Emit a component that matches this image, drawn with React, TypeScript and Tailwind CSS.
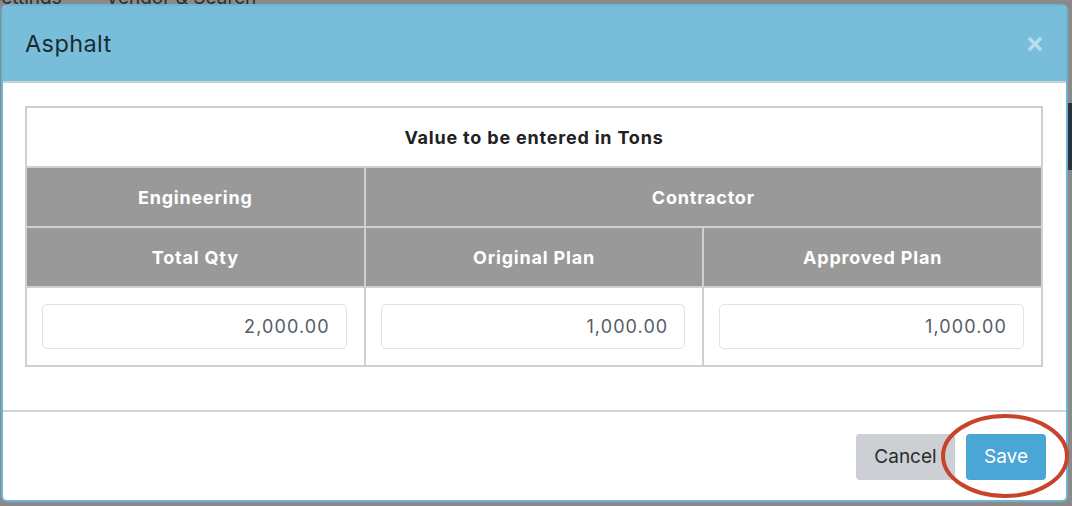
import React from "react";

const font = { fontFamily: "Inter, 'Noto Sans', 'Liberation Sans', sans-serif" };

function Cell({ children, className = "" }: { children?: React.ReactNode; className?: string }) {
  return <div className={`flex items-center justify-center ${className}`}>{children}</div>;
}

function QtyInput({ value }: { value: string }) {
  return (
    <div className="flex h-[45px] w-full items-center justify-end rounded-[5px] border-[1.5px] border-[#dfe2e6] bg-white pr-[16px] text-[18px] tracking-[1.1px] text-[#555d66]">
      {value}
    </div>
  );
}

export default function App() {
  return (
    <div className="relative h-[506px] w-[1072px] overflow-hidden bg-[#8a8a8a]" style={font}>
      {/* page behind the overlay */}
      <div className="h-[4px] overflow-hidden">
        <div className="-ml-[11px] -mt-[11px] flex gap-[44px] text-[19px] leading-[18px] text-[#2e2e2e]">
          <span>Settings</span>
          <span>Vendor &amp; Search</span>
        </div>
      </div>
      <div className="absolute right-0 top-[103px] h-[67px] w-[4px] bg-[#27343f]" />

      {/* modal */}
      <div className="absolute left-[1px] top-[4px] flex h-[498px] w-[1067px] flex-col overflow-hidden rounded-[6px] border-2 border-[#6cb4d4] bg-white">
        <div className="flex h-[77px] shrink-0 items-center justify-between border-b-2 border-[#c6d2d8] bg-[#78bedb] pl-[22px] pr-[24px]">
          <h4 className="text-[23.5px] font-normal tracking-[0.4px] text-[#1c2a32]">Asphalt</h4>
          <svg width="14" height="14" viewBox="0 0 14 14">
            <path d="M2 2 L12 12 M12 2 L2 12" stroke="#bbdeed" strokeWidth="3.4" strokeLinecap="round" />
          </svg>
        </div>

        <div className="flex-1 pl-[22px] pr-[23px] pt-[23px]">
          <div className="grid grid-cols-3 gap-[2px] border-2 border-[#cdd1d4] bg-[#cdd1d4] text-[18px] font-bold tracking-[0.8px]">
            <Cell className="col-span-3 h-[58px] bg-white text-[#222]">Value to be entered in Tons</Cell>
            <Cell className="h-[58px] bg-[#999999] text-white">Engineering</Cell>
            <Cell className="col-span-2 h-[58px] bg-[#999999] text-white">Contractor</Cell>
            <Cell className="h-[58px] bg-[#999999] text-white">Total Qty</Cell>
            <Cell className="h-[58px] bg-[#999999] text-white">Original Plan</Cell>
            <Cell className="h-[58px] bg-[#999999] text-white">Approved Plan</Cell>
            <Cell className="h-[77px] bg-white pl-[15px] pr-[17px] font-normal">
              <QtyInput value="2,000.00" />
            </Cell>
            <Cell className="h-[77px] bg-white pl-[15px] pr-[17px] font-normal">
              <QtyInput value="1,000.00" />
            </Cell>
            <Cell className="h-[77px] bg-white pl-[15px] pr-[17px] font-normal">
              <QtyInput value="1,000.00" />
            </Cell>
          </div>
        </div>

        <div className="flex h-[90px] shrink-0 items-start justify-end gap-[11px] border-t-2 border-[#d0d4d7] pr-[20px] pt-[22px]">
          <button className="flex h-[46px] w-[99px] items-center justify-center rounded-[4px] bg-[#ccd0d4] text-[19px] text-[#2b2b2b]">
            Cancel
          </button>
          <button className="flex h-[46px] w-[80px] items-center justify-center rounded-[4px] bg-[#4aa6d5] text-[19px] text-white">
            Save
          </button>
        </div>
      </div>

      {/* annotation */}
      <svg className="pointer-events-none absolute left-0 top-0" width="1072" height="506">
        <ellipse cx="1005" cy="456" rx="62" ry="40" fill="none" stroke="#c8432c" strokeWidth="4" />
      </svg>
    </div>
  );
}
